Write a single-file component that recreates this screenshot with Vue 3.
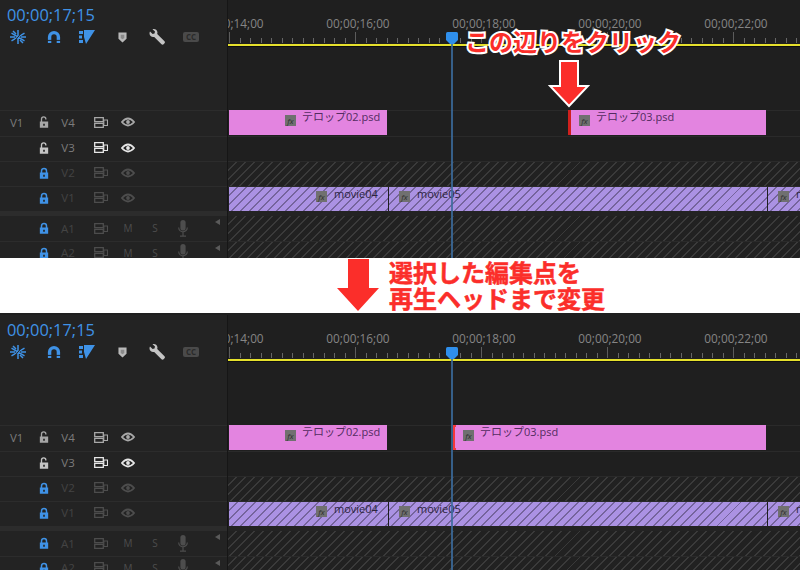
<template>
  <main class="page">
    <svg class="defs" aria-hidden="true">
      <symbol id="lock-closed" viewBox="0 0 12 14">
        <path d="M3 7V4.500a3 3 0 0 1 6 0V7" fill="none" stroke="currentColor" stroke-width="1.800" />
        <path d="M1 6.500h10V14H1zM5 9v2.500h2V9z" fill="currentColor" fill-rule="evenodd" />
      </symbol>
      <symbol id="lock-open" viewBox="0 0 12 14">
        <path d="M3 7V3.500a2.600 2.600 0 0 1 5.200 0V4" fill="none" stroke="currentColor" stroke-width="1.600" />
        <path d="M1 6.500h10V14H1zM5 9v2.500h2V9z" fill="currentColor" fill-rule="evenodd" />
      </symbol>
      <symbol id="film" viewBox="0 0 14 11">
        <path d="M.7.700h8.600v4H.7zM.7 6.300h8.600v4H.7z" fill="none" stroke="currentColor" stroke-width="1.300" />
        <path d="M9.800 3H13.500v5.500H9.800z" fill="none" stroke="currentColor" stroke-width="1.100" />
      </symbol>
      <symbol id="eye" viewBox="0 0 14 10">
        <path d="M.9 5Q7-2 13.100 5 7 12 .9 5z" fill="none" stroke="currentColor" stroke-width="1.800" />
        <circle cx="7" cy="5" r="1.900" fill="currentColor" />
      </symbol>
      <symbol id="mic" viewBox="0 0 10 17">
        <rect x="2.400" y="0" width="5.200" height="10.500" rx="2.600" fill="currentColor" />
        <path d="M.7 7.500a4.300 4.300 0 0 0 8.600 0M5 12v3.500M2 16.200h6" fill="none" stroke="currentColor" stroke-width="1.200" />
      </symbol>
      <symbol id="snap" viewBox="0 0 16 14">
        <path d="M8 0v14M1.500 3.200l13 7.600M14.500 3.200l-13 7.600M0 7h5M11 7h5M3 1l3 3M13 13l-3-3" fill="none" stroke="currentColor" stroke-width="1.500" />
        <path d="M3 13 13 1" stroke="#232323" stroke-width="1" />
      </symbol>
      <symbol id="magnet" viewBox="0 0 14 14">
        <path d="M2.600 13V7a4.400 4.400 0 0 1 8.800 0v6" fill="none" stroke="currentColor" stroke-width="3.400" />
        <path d="M0 10.400h5.200M8.800 10.400H14" stroke="#232323" stroke-width="1" />
      </symbol>
      <symbol id="linked" viewBox="0 0 16 14">
        <path d="M0 1h4v3H0zM0 5.500h3v3H0zM0 10h4v3H0zM5 0H16L7 14 5 7z" fill="currentColor" />
      </symbol>
      <symbol id="marker" viewBox="0 0 10 12">
        <path d="M.5.500h9v7L5 11.500.5 7.500z" fill="currentColor" />
        <path d="M3 3h4v3.500L5 8 3 6.500z" fill="#8a8a8a" />
      </symbol>
      <symbol id="wrench" viewBox="0 0 16 16">
        <path d="M1 2.500 3.600 5l1.900-.5L6 2.600 3.500.3C5.600-.5 8 .7 8.400 3c.1.700 0 1.300-.2 1.900l7.300 7.300c.6.600.6 1.500 0 2.100l-.9.900c-.6.600-1.500.6-2.100 0L5.200 7.900C3 8.600.6 7 .5 4.600c0-.8.100-1.500.5-2.100z" fill="currentColor" />
      </symbol>
    </svg>

    <template v-for="panel in panels" :key="panel.id">
      <section :class="['panel', `panel--${panel.id}`]">
        <div class="panel__body">
          <aside class="head">
            <div class="controls">
              <div class="timecode">00;00;17;15</div>
              <div class="tools">
                <svg class="tool tool--snap"><use href="#snap" /></svg>
                <svg class="tool tool--magnet"><use href="#magnet" /></svg>
                <svg class="tool tool--linked"><use href="#linked" /></svg>
                <svg class="tool tool--marker"><use href="#marker" /></svg>
                <svg class="tool tool--wrench"><use href="#wrench" /></svg>
                <span class="tool-cc">CC</span>
              </div>
            </div>

            <div
              v-for="track in tracks"
              :key="track.name"
              :class="['track-head', `track-head--${track.state}`, { 'track-head--first-audio': track.name === 'A1', 'track-head--top': track.name === 'V4' }]"
            >
              <span class="track-head__patch">{{ track.patch }}</span>
              <svg class="track-head__lock"><use :href="track.locked ? '#lock-closed' : '#lock-open'" /></svg>
              <span class="track-head__name">{{ track.name }}</span>
              <span class="track-head__cell"><svg class="icon-film"><use href="#film" /></svg></span>
              <span v-if="!track.audio" class="track-head__cell"><svg class="icon-eye"><use href="#eye" /></svg></span>
              <template v-else>
                <span class="track-head__cell track-head__letter">M</span>
                <span class="track-head__letter">S</span>
                <svg class="icon-mic"><use href="#mic" /></svg>
                <span class="track-head__tri"></span>
              </template>
            </div>
          </aside>

          <div class="timeline">
            <div class="ruler">
              <div class="ruler__labels">
                <span v-for="label in rulerLabels" :key="label">{{ label }}</span>
              </div>
              <svg class="ruler__ticks" width="572" height="11">
                <line
                  v-for="tick in ticks"
                  :key="tick.x"
                  :x1="tick.x"
                  :x2="tick.x"
                  :y1="tick.major ? 0 : 6"
                  y2="11"
                  :stroke="tick.major ? '#5c5c5c' : '#666'"
                />
              </svg>
              <div class="ruler__range"></div>
            </div>

            <div
              v-for="track in tracks"
              :key="track.name"
              :class="['lane', `lane--${track.kind}`, { 'lane--first-audio': track.name === 'A1', 'lane--top': track.name === 'V4' }]"
            >
              <div
                v-for="clip in clipsFor(panel, track.name)"
                :key="clip.label"
                :class="['clip', `clip--${track.kind}`, clip.trim && `clip--trim-${clip.trim}`]"
                :style="{ left: clip.left + 'px', width: clip.width + 'px', paddingLeft: clip.pad + 'px' }"
              >
                <span class="clip__fx">fx</span>
                <span class="clip__label">{{ clip.label }}</span>
              </div>
            </div>

            <div class="playhead">
              <svg class="playhead__top" width="12" height="12" viewBox="0 0 12 12">
                <path d="M0 1.500Q0 0 1.500 0h9Q12 0 12 1.500V8l-4 4H4L0 8z" fill="#2f8fec" />
              </svg>
              <div class="playhead__line"></div>
            </div>
          </div>

          <template v-if="panel.id === 'before'">
            <div class="callout">この辺りをクリック</div>
            <svg class="callout-arrow" width="42" height="50" viewBox="0 0 42 50">
              <path d="M12 2h18v25h10L21 47 2 27h10z" fill="#fb2e2a" stroke="#fff" stroke-width="2" />
            </svg>
          </template>
        </div>
      </section>

      <div v-if="panel.id === 'before'" class="band">
        <svg class="band__arrow" width="42" height="52" viewBox="0 0 42 52">
          <path d="M11 0h21v29h10L21 52 0 29h11z" fill="#fb2e2a" />
        </svg>
        <p class="band__text">選択した編集点を<br />再生ヘッドまで変更</p>
      </div>
    </template>
  </main>
</template>

<script setup>
const tracks = [
  { name: 'V4', patch: 'V1', kind: 'empty', state: 'normal', locked: false },
  { name: 'V3', patch: '', kind: 'empty', state: 'bright', locked: false },
  { name: 'V2', patch: '', kind: 'hatch', state: 'dim', locked: true },
  { name: 'V1', patch: '', kind: 'purple', state: 'dim', locked: true },
  { name: 'A1', patch: '', kind: 'hatch', state: 'dim', locked: true, audio: true },
  { name: 'A2', patch: '', kind: 'hatch', state: 'dim', locked: true, audio: true },
]

const movies = [
  { label: 'movie04', left: 1, width: 159, pad: 87 },
  { label: 'movie05', left: 161, width: 378, pad: 10 },
  { label: 'movie06', left: 540, width: 40, pad: 10 },
]

const panels = [
  {
    id: 'before',
    clips: {
      V4: [
        { label: 'テロップ02.psd', left: 1, width: 158, pad: 56 },
        { label: 'テロップ03.psd', left: 340, width: 198, pad: 8, trim: 'bar' },
      ],
      V1: movies,
    },
  },
  {
    id: 'after',
    clips: {
      V4: [
        { label: 'テロップ02.psd', left: 1, width: 158, pad: 56 },
        { label: 'テロップ03.psd', left: 225, width: 313, pad: 10, trim: 'bracket' },
      ],
      V1: movies,
    },
  },
]

const rulerLabels = ['00;00;14;00', '00;00;16;00', '00;00;18;00', '00;00;20;00', '00;00;22;00']

const ticks = Array.from({ length: 55 }, (_, i) => ({
  x: Math.round(i * 10.5) + 1.5,
  major: i % 12 === 0,
}))

function clipsFor(panel, trackName) {
  return panel.clips[trackName] ?? []
}
</script>

<style scoped>
.page {
  display: flex;
  flex-direction: column;
  width: 800px;
  height: 570px;
  overflow: hidden;
  background: #fff;
  font-family: "Open Sans", "Noto Sans CJK JP", sans-serif;
}

.defs {
  position: absolute;
  width: 0;
  height: 0;
}

.panel {
  flex: none;
  height: 258px;
  overflow: hidden;
  background: #1f1f1f;
}

.panel--after {
  height: 257px;
  padding-top: 2px;
  box-sizing: border-box;
}

.panel__body {
  position: relative;
  display: grid;
  grid-template-columns: 228px 572px;
  height: 266px;
  background: #1f1f1f;
}

.band {
  flex: none;
  display: flex;
  align-items: flex-start;
  gap: 10px;
  height: 55px;
  box-sizing: border-box;
  padding: 1px 0 0 337px;
  background: #fff;
}

.band__arrow {
  flex: none;
}

.band__text {
  margin: 0;
  font-family: "Noto Sans CJK JP", sans-serif;
  font-size: 24px;
  font-weight: 700;
  line-height: 26px;
  color: #fb2e2a;
  -webkit-text-stroke: 0.5px #fb2e2a;
  white-space: nowrap;
}

.head {
  background: #232323;
}

.controls {
  height: 110px;
  box-sizing: border-box;
  padding-top: 5px;
}

.timecode {
  padding-left: 7px;
  font-size: 16.4px;
  line-height: 20px;
  color: #3f92e6;
}

.tools {
  position: relative;
  height: 20px;
  margin-top: 1px;
}

.tool {
  position: absolute;
  top: 4px;
  color: #3f92e6;
}

.tool--snap { left: 10px; width: 16px; height: 14px; }
.tool--magnet { left: 47px; width: 14px; height: 14px; }
.tool--linked { left: 79px; width: 16px; height: 14px; }
.tool--marker { left: 118px; top: 6px; width: 9px; height: 11px; color: #b9b9b9; }
.tool--wrench { left: 149px; top: 3px; width: 16px; height: 16px; color: #c4c4c4; }

.tool-cc {
  position: absolute;
  left: 183px;
  top: 6px;
  width: 16px;
  height: 10px;
  border-radius: 2px;
  background: #4a4a4a;
  color: #2a2a2a;
  font-size: 8px;
  font-weight: 700;
  line-height: 10px;
  text-align: center;
}

.track-head {
  display: grid;
  grid-template-columns: 34px 20px 28px 38px 16px 38px 18px 36px;
  align-items: center;
  height: 25px;
  padding-bottom: 3px;
  border-top: 1px solid #2c2c2c;
  box-sizing: border-box;
  font-size: 11.5px;
  color: #7c7c7c;
}

.track-head--top {
  height: 26px;
}

.track-head--first-audio {
  height: 30px;
  padding-bottom: 1px;
  border-top: 5px solid #2c2c2c;
}

.track-head--normal { color: #a8a8a8; }
.track-head--bright { color: #e6e6e6; }
.track-head--dim { color: #4d4d4d; }

.track-head__patch {
  padding-left: 10px;
  color: #7c7c7c;
}

.track-head__lock {
  justify-self: center;
  width: 10px;
  height: 12px;
  color: #a6a6a6;
}

.track-head--bright .track-head__lock {
  color: #c4c4c4;
}

.track-head--dim .track-head__lock {
  color: #3f92e6;
}

.track-head__name {
  text-align: center;
}

.track-head--normal .track-head__name,
.track-head--bright .track-head__name {
  color: #7c7c7c;
}

.track-head--dim .track-head__name {
  color: #444;
}

.track-head__cell {
  display: flex;
  justify-content: center;
}

.track-head__letter {
  text-align: center;
  font-size: 10px;
}

.icon-film {
  width: 14px;
  height: 11px;
}

.icon-eye {
  width: 14px;
  height: 10px;
}

.icon-mic {
  justify-self: center;
  width: 10px;
  height: 17px;
}

.track-head__tri {
  justify-self: end;
  align-self: start;
  margin: 3px 8px 0 0;
  border-style: solid;
  border-width: 3px 5px 3px 0;
  border-color: transparent #5a5a5a transparent transparent;
}

.timeline {
  position: relative;
  overflow: hidden;
  width: 573px;
  margin-left: -1px;
  border-left: 1px solid #161616;
}

.ruler {
  height: 110px;
  box-sizing: border-box;
  padding-top: 17px;
}

.ruler__labels {
  display: flex;
  margin-left: -59px;
  font-size: 11.8px;
  line-height: 12px;
  color: #858585;
}

.ruler__labels span {
  flex: 0 0 126px;
  text-align: center;
}

.ruler__ticks {
  display: block;
  margin-top: 3px;
}

.ruler__range {
  height: 3px;
  box-sizing: border-box;
  margin-top: 1px;
  background: #e5e02c;
  border-bottom: 1px solid #0e0e0e;
}

.lane {
  position: relative;
  height: 25px;
  box-sizing: border-box;
  border-top: 1px solid #2a2a2a;
}

.lane--top {
  height: 26px;
}

.lane--first-audio {
  height: 30px;
  border-top: 5px solid #232323;
}

.lane--hatch {
  background: repeating-linear-gradient(135deg, #212121 0 5px, #3a3a3a 5px 6.400px);
}

.clip {
  position: absolute;
  top: 0;
  height: 24px;
  box-sizing: border-box;
  display: flex;
  align-items: flex-start;
  gap: 6px;
  white-space: nowrap;
  overflow: hidden;
  font-size: 11px;
  line-height: 14px;
}

.clip--empty {
  top: -1px;
  height: 25px;
  background: #e384e0;
  color: #532c60;
}

.clip--purple {
  gap: 7px;
  background: repeating-linear-gradient(135deg, #ab92e3 0 5px, #75649c 5px 6.400px);
  color: #2c2440;
}

.clip__fx {
  flex: none;
  width: 11px;
  height: 11px;
  margin-top: 5px;
  background: #707070;
  color: #2d2d2d;
  font-size: 8px;
  font-style: italic;
  line-height: 11px;
  text-align: center;
}

.clip--purple .clip__fx {
  margin-top: 4px;
}

.clip--trim-bar {
  border-left: 3px solid #d0201d;
}

.clip--trim-bracket::before {
  content: "";
  position: absolute;
  left: 0;
  top: 0;
  bottom: 0;
  width: 3px;
  border-left: 2px solid #f4383a;
  border-top: 2px solid #f4383a;
  border-bottom: 2px solid #f4383a;
  box-sizing: border-box;
}

.playhead {
  position: absolute;
  left: 218px;
  top: 32px;
  bottom: 0;
  width: 12px;
  display: flex;
  flex-direction: column;
  align-items: center;
}

.playhead__top {
  flex: none;
}

.playhead__line {
  flex: 1;
  width: 2px;
  background: #3b6b9c;
  opacity: 0.85;
}

.callout {
  position: absolute;
  left: 465px;
  top: 24px;
  font-family: "Noto Sans CJK JP", sans-serif;
  font-size: 24px;
  font-weight: 700;
  line-height: 34px;
  color: #fb2e2a;
  -webkit-text-stroke: 4px #fff;
  paint-order: stroke fill;
  white-space: nowrap;
}

.callout-arrow {
  position: absolute;
  left: 548px;
  top: 59px;
}
</style>

<style>
html,
body {
  margin: 0;
  background: #fff;
}
</style>
